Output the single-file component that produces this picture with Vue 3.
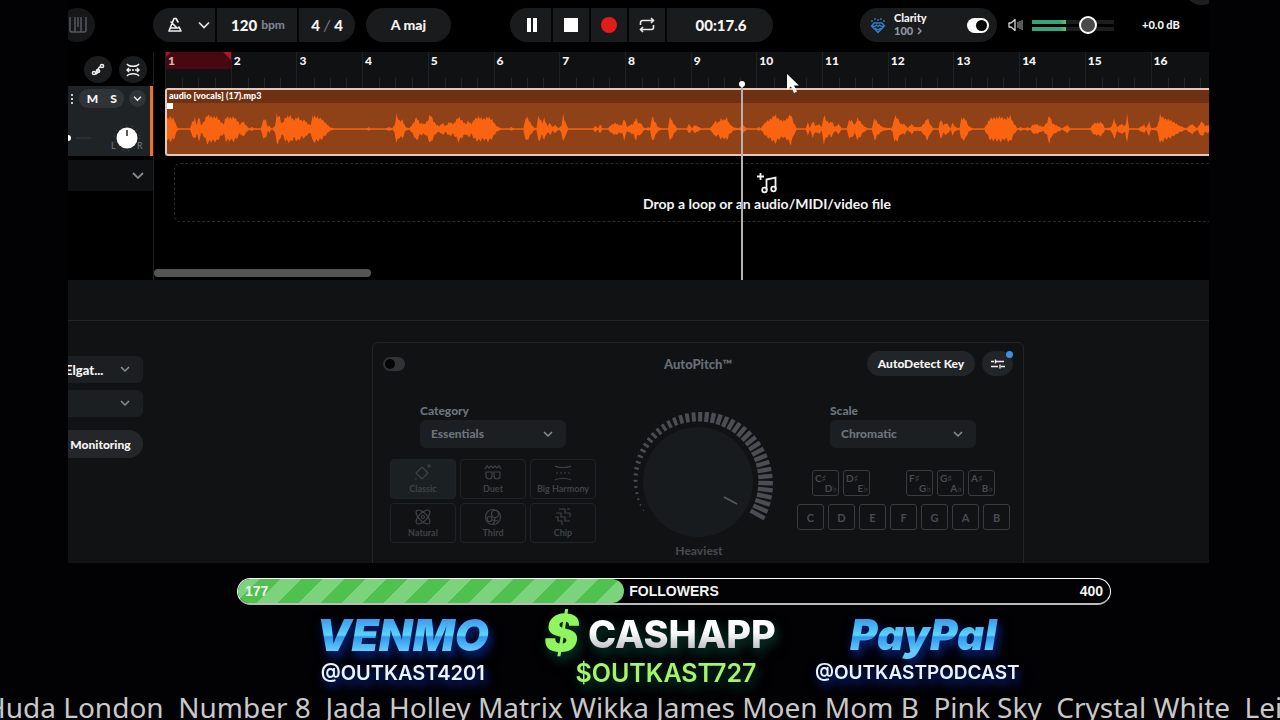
<script setup>
import { ref } from 'vue'

const bars = Array.from({ length: 16 }, (_, i) => i + 1)
const clarityOn = ref(true)
const pitchOn = ref(false)
const volume = ref(74)
const category = ref('Essentials')
const scale = ref('Chromatic')
const voice = ref('Classic')

const voices = ['Classic', 'Duet', 'Big Harmony', 'Natural', 'Third', 'Chip']
const sharps = [
  [['C♯', 'D♭'], ['D♯', 'E♭']],
  [['F♯', 'G♭'], ['G♯', 'A♭'], ['A♯', 'B♭']],
]
const naturals = [['C', 'D', 'E'], ['F', 'G', 'A', 'B']]

const envelope = '0:10,3:12,7:10,10:2,12:1,23:1,25:6,28:11,30:4,32:14,34:4,36:6,38:9,40:14,45:12,50:12,54:7,57:5,59:12,64:11,67:12,71:8,73:4,76:8,79:4,82:1,85:2,88:1,94:1,97:10,99:9,101:2,103:4,104:1,106:1,108:3,110:14,113:12,115:5,119:12,124:13,127:9,131:12,135:8,138:9,141:5,144:4,146:13,150:12,155:10,159:6,163:2,167:1,200:1,202:2,204:1,219:1,223:2,226:1,228:4,230:14,233:8,236:9,239:2,243:1,247:6,250:12,253:6,258:5,261:8,264:15,267:8,270:4,273:3,276:6,279:3,283:7,287:5,292:12,296:8,299:5,302:8,305:5,308:10,312:12,317:10,322:12,326:9,330:3,335:1,343:1,345:2,348:1,357:1,360:13,363:8,367:2,370:1,372:12,374:10,376:6,378:11,381:3,384:6,386:2,389:4,392:1,395:3,397:14,399:7,402:1,427:1,429:3,432:1,434:5,436:1,442:1,445:4,449:6,453:4,456:4,458:11,461:2,464:4,467:5,470:11,472:6,475:6,477:2,480:1,482:2,484:1,486:13,489:7,492:2,496:1,502:1,504:13,507:6,511:1,521:1,523:5,526:1,529:4,535:1,544:1,547:4,549:8,552:6,555:10,558:9,561:11,563:6,567:2,573:1,577:4,581:1,591:1,593:2,595:1,598:5,601:8,605:10,609:14,613:10,617:8,621:10,625:15,628:6,631:1,640:1,642:7,644:1,647:8,650:3,653:5,656:2,658:14,661:8,664:6,666:8,669:2,673:5,676:1,681:1,683:8,686:9,689:4,692:11,695:7,698:3,702:1,706:1,709:11,712:6,717:2,725:1,727:3,729:13,732:11,735:5,739:5,742:1,746:5,749:2,755:2,758:5,762:11,765:4,768:1,773:1,775:10,778:4,781:6,785:1,787:6,790:2,794:1,796:11,800:10,803:3,807:1,819:1,822:6,825:11,830:11,835:12,840:10,845:13,848:6,852:1,855:2,859:1,862:2,865:1,867:4,871:5,875:3,878:2,882:7,884:14,887:6,892:3,897:1,902:4,905:1,925:1,929:6,933:6,936:7,940:1,946:2,949:10,952:2,956:5,960:3,962:14,964:1,973:1,979:4,981:1,984:7,986:1,992:2,995:14,1000:10,1005:9,1010:6,1015:3,1021:1,1027:5,1032:1,1037:8,1040:3,1044:4'
  .split(',')
  .map((p) => p.split(':').map(Number))

function ampAt(x) {
  let i = envelope.findIndex((p) => p[0] >= x)
  if (i <= 0) return envelope[0][1]
  const [x0, a0] = envelope[i - 1]
  const [x1, a1] = envelope[i]
  return a0 + ((a1 - a0) * (x - x0)) / (x1 - x0)
}
const upper = []
const lower = []
for (let x = 0; x <= 1044; x++) {
  const a = ampAt(x)
  const up = a < 2 ? a * 0.8 : a * (0.98 + 0.16 * Math.sin(x * 2.3))
  const down = a < 2 ? a * 0.8 : a * (0.98 + 0.16 * Math.cos(x * 1.7))
  upper.push(`${x},${(17 - up).toFixed(1)}`)
  lower.unshift(`${x},${(17 + down).toFixed(1)}`)
}
const wave = [...upper, ...lower].join(' ')

const ticks = Array.from({ length: 43 }, (_, i) => {
  const t = i / 42
  const a = ((153 + 236 * t) * Math.PI) / 180
  const r0 = 62 - 3 * t
  const r1 = r0 + 1 + 15 * Math.pow(t, 0.8)
  return {
    x1: (80 + r0 * Math.cos(a)).toFixed(1),
    y1: (80 + r0 * Math.sin(a)).toFixed(1),
    x2: (80 + r1 * Math.cos(a)).toFixed(1),
    y2: (80 + r1 * Math.sin(a)).toFixed(1),
    w: (1.2 + 3.2 * Math.min(1, t * 1.8)).toFixed(1),
  }
})

const followers = 177
const goal = 400
</script>

<template>
  <div class="page">
    <div class="studio">
      <header class="topbar">
        <button class="round-btn piano" aria-label="Keyboard">
          <svg width="18" height="18" viewBox="0 0 18 18" fill="none" stroke="#55585d" stroke-width="1.5"><path d="M1 1v13a2 2 0 0 0 2 2h12a2 2 0 0 0 2-2V1M6 1v10M9 1v10M12 1v10M6 11v5M12 11v5" /></svg>
        </button>
        <div class="pill tempo">
          <button class="seg metro" aria-label="Metronome">
            <svg width="16" height="16" viewBox="0 0 16 16" fill="none" stroke="#f2f2f2" stroke-width="1.6" stroke-linejoin="round" stroke-linecap="round"><path d="M11 5 9 1.500H7L2 14h12l-2-4M4 11h7M10 11 4 5" /></svg>
            <svg width="12" height="8" viewBox="0 0 12 8" fill="none" stroke="#e6e6e6" stroke-width="1.700"><path d="M1 1.500 6 6.500 11 1.500" /></svg>
          </button>
          <button class="seg bpm"><span>120</span><small>bpm</small></button>
          <button class="seg sig">4 <i>/</i> 4</button>
        </div>
        <button class="pill key">A maj</button>
        <div class="pill transport">
          <button class="seg pause" aria-label="Pause"><svg width="12" height="14"><path d="M1 0h4v14H1zM7 0h4v14H7z" fill="#fff" /></svg></button>
          <button class="seg" aria-label="Stop"><svg width="14" height="14"><path d="M0 0h14v14H0z" fill="#fff" /></svg></button>
          <button class="seg" aria-label="Record"><svg width="18" height="18"><circle cx="9" cy="9" r="8" fill="#e21b1b" /></svg></button>
          <button class="seg" aria-label="Loop"><svg width="16" height="16" viewBox="0 0 16 16" fill="none" stroke="#e8e8e8" stroke-width="1.600"><path d="M1.500 8V5.500a2 2 0 0 1 2-2H14M12 1l2.500 2.500L12 6M14.500 8v2.500a2 2 0 0 1-2 2H2M4 10l-2.500 2.500L4 15" /></svg></button>
          <span class="seg time">00:17.6</span>
        </div>
        <div class="pill clarity">
          <svg width="16" height="17" viewBox="0 0 16 17" fill="none" stroke="#2f7fc8" stroke-width="1.300"><path d="M4 6h8l2.500 3L8 15.500 1.500 9zM1.500 9l3 .5L6.500 8 8 9.500 9.500 8l2 1.500 3-.5M5 11l3 2 3-2M5 1v2M8 2v2M11 1v2M2 3v2M14 3v2" /></svg>
          <label class="clarity-text" for="clarity"><b>Clarity</b><span>100 <svg width="5" height="8" viewBox="0 0 5 8" fill="none" stroke="#9296a0" stroke-width="1.500"><path d="m1 1 3 3-3 3" /></svg></span></label>
          <input id="clarity" v-model="clarityOn" class="switch" type="checkbox">
        </div>
        <svg class="speaker" width="16" height="14" viewBox="0 0 16 14" fill="none" stroke="#d5d5d5" stroke-width="1.300"><path d="M1 5h2l4-3.500v11L3 9H1z" stroke-linejoin="round" /><path d="M10 4v6M12 3v8M14 2v10" stroke="#8a8a8a" /></svg>
        <div class="volume">
          <div class="meter"></div><div class="meter"></div>
          <input v-model="volume" type="range" min="0" max="100" aria-label="Volume">
        </div>
        <output class="db">+0.0 dB</output>
        <span class="corner"></span>
      </header>

      <main class="arranger">
        <aside class="tracks">
          <div class="tools">
            <button class="tool" aria-label="Automation"><svg width="14" height="14" viewBox="0 0 14 14" fill="none" stroke="#f0f0f0" stroke-width="1.500"><circle cx="3" cy="10" r="1.600" /><circle cx="11" cy="3" r="1.600" /><circle cx="7" cy="8" r="1.600" /><path d="M4.500 11c2 0 2-1 2.500-3 0-3 1-4 2.500-4" /></svg></button>
            <button class="tool" aria-label="Snap"><svg width="14" height="14" viewBox="0 0 14 14" fill="none" stroke="#f0f0f0" stroke-width="1.400"><path d="M1 1c2 3 10 3 12 0M1 13c2-3 10-3 12 0M1 7h4M9 7h4M3 5 1 7l2 2M11 5l2 2-2 2M6 7h2" /></svg></button>
          </div>
          <section class="track">
            <div class="track-row">
              <svg width="4" height="12"><path d="M1 1h2v2H1zM1 5h2v2H1zM1 9h2v2H1z" fill="#ccc" /></svg>
              <div class="ms"><button>M</button><button>S</button></div>
              <button class="more" aria-label="Track menu"><svg width="9" height="6" viewBox="0 0 10 7" fill="none" stroke="#eee" stroke-width="1.600"><path d="m1 1 4 4 4-4" /></svg></button>
            </div>
            <div class="track-row knobs">
              <svg width="82" height="32" viewBox="0 0 82 32"><circle cx="0" cy="16" r="3" fill="#fff" /><path d="M8 16h15" stroke="#383c40" /><circle cx="59" cy="16" r="13" fill="none" stroke="#53575b" stroke-dasharray="1 5" /><circle cx="59" cy="16" r="10.500" fill="#fff" /><path d="M59 8v6" stroke="#222" stroke-width="1.500" /><text x="43" y="27">L</text><text x="69" y="27">R</text></svg>
            </div>
          </section>
          <button class="extra" aria-label="Expand"><svg width="12" height="8" viewBox="0 0 12 8" fill="none" stroke="#85888f" stroke-width="1.800"><path d="m1 1 5 5 5-5" /></svg></button>
        </aside>

        <section class="timeline">
          <div class="lanes">
            <div class="ruler"><div class="bars">
              <div v-for="n in bars" :key="n" class="bar" :class="{ loop: n === 1 }"><span>{{ n }}</span><i></i><i></i><i></i></div>
            </div></div>
            <article class="clip">
              <div class="clip-name">audio [vocals] (17).mp3</div>
              <svg class="wave" viewBox="0 0 1044 34" preserveAspectRatio="none"><polygon :points="wave" fill="#fa6410" /></svg>
              <span class="fade"></span>
            </article>
            <div class="drop">
              <svg width="22" height="22" viewBox="0 0 22 22" fill="none" stroke="#f2f2f2" stroke-width="1.800"><path d="M4.500 1v7M1 4.500h7M10.500 18V7.500l9-2V17" /><circle cx="8.500" cy="18" r="2.300" /><circle cx="17.500" cy="17" r="2.300" /></svg>
              <p>Drop a loop or an audio/MIDI/video file</p>
            </div>
            <div class="playhead"></div>
            <svg class="cursor" width="13" height="20" viewBox="0 0 13 20"><path d="M1 0v16l4-3.500 3 6.500 3-1.500-3-6h5z" fill="#fff" /></svg>
          </div>
          <div class="scroll"><div></div></div>
        </section>
      </main>

      <section class="lower">
        <div class="lower-head"></div>
        <div class="lower-body">
          <div class="inputs">
            <div class="field"><select aria-label="Input device"><option>Elgat...</option></select><svg width="10" height="7" viewBox="0 0 10 7"><path d="m1 1 4 4 4-4" /></svg></div>
            <div class="field"><select aria-label="Input channel"><option></option></select><svg width="10" height="7" viewBox="0 0 10 7"><path d="m1 1 4 4 4-4" /></svg></div>
            <button class="monitoring">Monitoring</button>
          </div>

          <section class="pitch">
            <div class="pitch-head">
              <input v-model="pitchOn" class="switch dim" type="checkbox" aria-label="AutoPitch">
              <h2>AutoPitch™</h2>
              <div class="pitch-actions">
                <button class="detect">AutoDetect Key</button>
                <button class="settings" aria-label="Settings"><svg width="14" height="10" viewBox="0 0 14 10" fill="none" stroke="#eee" stroke-width="1.400"><path d="M0 2.500h3M5 2.500h8M0 7.500h7M10 7.500h4M4.500 .5v4M9 5.500v4" /></svg><span></span></button>
              </div>
            </div>
            <div class="pitch-body">
              <div class="voice-col">
                <div class="choice">
                  <label for="category">Category</label>
                  <div class="field soft"><select id="category" v-model="category"><option>Essentials</option></select><svg width="10" height="7" viewBox="0 0 10 7"><path d="m1 1 4 4 4-4" /></svg></div>
                </div>
                <div class="voices">
                  <button v-for="v in voices" :key="v" :class="{ on: v === voice }" @click="voice = v">
                    <svg width="18" height="18" viewBox="0 0 18 18">
                      <path v-if="v === 'Classic'" d="m8 3 6 6-6 6-6-6zM13 2h4M15 0v4M1 15h2" />
                      <path v-else-if="v === 'Duet'" d="M1 5l2-3 2 2 2-2 2 2 2-2 2 2 2-2 2 3M2 8h6v4a3 3 0 0 1-6 0zM10 8h6v4a3 3 0 0 1-6 0z" />
                      <path v-else-if="v === 'Big Harmony'" d="M1 2c3 2 13 2 16 0M1 16c3-2 13-2 16 0M2 9h2M6 9h2M10 9h2M14 9h2" />
                      <g v-else-if="v === 'Natural'"><ellipse cx="9" cy="9" rx="4" ry="9" transform="rotate(45 9 9)" /><ellipse cx="9" cy="9" rx="4" ry="9" transform="rotate(-45 9 9)" /><circle cx="9" cy="9" r="1.500" /></g>
                      <g v-else-if="v === 'Third'"><circle cx="9" cy="9" r="7.500" /><circle cx="11" cy="6" r="3.500" /><circle cx="5.500" cy="11" r="2.500" /><path d="M11 10c0 3-1 5-2 6M8 12l6 1" /></g>
                      <path v-else d="M2 5h5v4h4v4h5M5 1h6v4h5v4M1 9h3v4h4v4M13 1h3" />
                    </svg>
                    <span>{{ v }}</span>
                  </button>
                </div>
              </div>

              <div class="dial">
                <svg width="160" height="160" viewBox="0 0 160 160">
                  <line v-for="(t, i) in ticks" :key="i" :x1="t.x1" :y1="t.y1" :x2="t.x2" :y2="t.y2" :stroke-width="t.w" stroke="#4a4e53" />
                  <circle cx="79" cy="80" r="55" fill="#171b1d" />
                  <path d="m105 95 13 7" stroke="#565a5f" stroke-width="1.500" />
                </svg>
                <span>Heaviest</span>
              </div>

              <div class="scale-col">
                <div class="choice">
                  <label for="scale">Scale</label>
                  <div class="field soft"><select id="scale" v-model="scale"><option>Chromatic</option></select><svg width="10" height="7" viewBox="0 0 10 7"><path d="m1 1 4 4 4-4" /></svg></div>
                </div>
                <div class="keys sharp">
                  <div v-for="(g, i) in sharps" :key="i"><button v-for="k in g" :key="k[0]"><span>{{ k[0] }}</span><span>{{ k[1] }}</span></button></div>
                </div>
                <div class="keys natural">
                  <div v-for="(g, i) in naturals" :key="i"><button v-for="k in g" :key="k">{{ k }}</button></div>
                </div>
              </div>
            </div>
          </section>
        </div>
      </section>
    </div>

    <footer class="stream">
      <div class="goal">
        <div class="goal-fill" :style="{ width: (followers / goal) * 100 + '%' }"></div>
        <span>{{ followers }}</span><span>FOLLOWERS</span><span>{{ goal }}</span>
      </div>
      <div class="tips">
        <div class="tip venmo"><strong>VENMO</strong><span>@OUTKAST4201</span></div>
        <div class="tip cash"><strong><em>$</em><b>CASHAPP</b></strong><span>$OUTKAST727</span></div>
        <div class="tip paypal"><strong>PayPal</strong><span>@OUTKASTPODCAST</span></div>
      </div>
      <div class="ticker">Huda London&nbsp; Number 8&nbsp; Jada Holley Matrix Wikka James Moen Mom B&nbsp; Pink Sky&nbsp; Crystal White&nbsp; Leigh</div>
    </footer>
  </div>
</template>

<style>
body { background: #000; }
</style>

<style scoped>
* { box-sizing: border-box; }
.page { min-height: 100vh; overflow: hidden; background: #020103; color: #f4f4f4; font-family: Lato, "Open Sans", "DejaVu Sans", sans-serif; }
button, select, input { font: inherit; color: inherit; margin: 0; }
button { border: 0; padding: 0; background: none; display: flex; align-items: center; justify-content: center; cursor: pointer; }
svg { display: block; flex: none; }
.studio { margin: 0 71px 0 68px; overflow: hidden; background: #000; }

.topbar { position: relative; display: flex; align-items: center; height: 52px; padding: 8px 29px 10px 0; font-weight: 900; font-size: 14px; }
.round-btn { width: 35px; height: 34px; border-radius: 50%; background: #161719; }
.piano { margin-left: -8px; }
.pill { display: flex; height: 34px; border-radius: 17px; background: #1a1b1d; overflow: hidden; white-space: nowrap; flex: none; line-height: 18px; }
.tempo { margin-left: 58px; }
.seg { display: flex; align-items: center; justify-content: center; width: 38px; border-right: 2px solid #060607; }
.seg:last-child { border-right: 0; }
.metro { width: 64px; gap: 15px; padding-left: 9px; }
.bpm { width: 82px; gap: 4px; font-size: 15px; padding-left: 2px; }
.bpm small { font-size: 12px; color: #7d8290; }
.sig { width: 56px; gap: 4px; font-size: 15px; }
.sig i { color: #7d8290; font-weight: 400; }
.key { width: 85px; margin-left: 11px; align-items: center; }
.transport { margin-left: 59px; }
.pause { width: 43px; padding-left: 3px; }
.time { width: 106px; font-size: 15px; padding-left: 2px; }
.clarity { width: 137px; margin-left: auto; padding: 0 8px 0 10px; align-items: center; }
.clarity-text { display: flex; flex-direction: column; margin: 0 auto 2px 8px; font-size: 11px; line-height: 13px; }
.clarity-text span { display: flex; align-items: center; gap: 4px; color: #9296a0; }
.switch { appearance: none; position: relative; width: 22px; height: 15px; border-radius: 8px; background: #fff; }
.switch::after { content: ""; position: absolute; top: 2px; right: 2px; width: 11px; height: 11px; border-radius: 50%; background: #050505; }
.switch.dim { background: #303235; height: 14px; }
.switch.dim::after { right: auto; left: 2px; top: 2px; width: 10px; height: 10px; }
.speaker { margin-left: 11px; }
.volume { position: relative; width: 82px; margin-left: 8px; display: grid; gap: 3px; }
.meter { height: 4px; background: linear-gradient(90deg, #35a67c 0 28px, #6cc45c 34px, #1c1d1f 34px); }
.volume input { appearance: none; position: absolute; left: 0; top: -4px; width: 100%; height: 19px; background: none; }
.volume input::-webkit-slider-thumb { appearance: none; width: 18px; height: 18px; border: 2px solid #fff; border-radius: 50%; background: #494949; }
.db { margin: 0 0 2px 28px; font-size: 11px; font-weight: 900; width: 38px; white-space: nowrap; }
.corner { position: absolute; right: -10px; top: -30px; width: 35px; height: 35px; border-radius: 50%; background: #1d1f21; }

.arranger { display: grid; grid-template-columns: 86px minmax(0, 1fr); height: 228px; }
.tracks { border-right: 1px solid #1d1f21; }
.tools { display: flex; gap: 7px; padding: 4px 0 3px 16px; }
.tool { width: 28px; height: 27px; border-radius: 50%; background: #1b1c1e; }
.track { height: 70px; background: #1f2326; border-right: 3px solid #f0702a; padding-top: 3px; }
.track-row { display: flex; align-items: center; gap: 5px; padding-left: 2px; }
.ms { display: flex; width: 45px; height: 19px; border-radius: 9px; background: #303437; font-size: 12px; font-weight: 900; padding: 0 0 1px 3px; }
.ms button { flex: 1; }
.more { width: 17px; height: 17px; border-radius: 50%; background: #303437; }
.knobs { padding: 14px 0 0; }
.knobs text { font-size: 9px; fill: #777b80; }
.extra { width: 100%; height: 31px; margin-top: 4px; justify-content: flex-end; padding-right: 9px; background: #0e1011; }
.timeline { display: flex; flex-direction: column; justify-content: space-between; padding-bottom: 3px; }
.lanes { position: relative; margin-left: 11px; height: 216px; }
.ruler { height: 36px; overflow: hidden; background: #0f1112; }
.bars { display: flex; width: 100.7%; height: 100%; }
.bar { flex: 1; display: grid; grid-template-columns: repeat(4, 1fr); border-left: 1px solid #1f2123; font-size: 12px; font-weight: 900; line-height: 17px; }
.bar span { padding-left: 2px; }
.bar i { height: 10px; align-self: end; border-left: 1px solid #242628; }
.loop { background-size: 100% 17px; background-repeat: no-repeat; background-image: linear-gradient(225deg, #b31225 5px, transparent 6px), linear-gradient(135deg, #b31225 3px, transparent 4px), linear-gradient(#47090f, #47090f); color: #d9b7b7; }
.clip { position: relative; height: 68px; background: #8f4118; border: 2px solid #e6c6b4; border-right: 0; border-radius: 3px 0 0 3px; overflow: hidden; }
.clip-name { height: 13px; padding-left: 2px; background: #6f3114; color: #fff; font-size: 9px; line-height: 11px; font-weight: 900; }
.wave { width: 100%; height: 34px; margin-top: 9px; }
.fade { position: absolute; left: 0; top: 13px; width: 6px; height: 6px; background: #fff; }
.drop { margin: 7px 0 0 9px; height: 59px; border: 1px dashed #292929; border-right: 0; border-radius: 6px 0 0 6px; display: flex; flex-direction: column; align-items: center; padding: 8px 0 0 150px; }
.drop p { margin: 1px 0 0; font-size: 14px; line-height: 18px; font-weight: 700; }
.playhead { position: absolute; left: 55%; margin-left: 2px; top: 31px; height: 197px; border-left: 2px solid #b5b2b1; }
.playhead::before { content: ""; position: absolute; left: -4px; top: -2px; width: 6px; height: 6px; border-radius: 50%; background: #fff; }
.cursor { position: absolute; left: 59%; margin-left: 5px; top: 22px; }
.scroll div { width: 217px; height: 8px; border-radius: 4px; background: #555; }

.lower { height: 283px; background: #101214; overflow: hidden; }
.lower-head { height: 41px; border-bottom: 1px solid #222426; }
.lower-body { display: flex; padding-top: 21px; }
.inputs { width: 75px; padding-top: 14px; display: flex; flex-direction: column; gap: 7px; }
.field { position: relative; display: flex; align-items: center; height: 27px; }
.field select { appearance: none; width: 100%; height: 100%; border: 0; border-radius: 6px; background: #1c1f21; font-size: 12px; font-weight: 900; outline: 0; }
.field svg { position: absolute; right: 13px; fill: none; stroke: #8b8e93; stroke-width: 1.5; pointer-events: none; }
.inputs .field { margin-left: -20px; }
.inputs select { padding: 0 0 0 17px; font-size: 13px; }
.monitoring { margin: 6px 0 0 -20px; padding-left: 10px; height: 28px; border-radius: 14px; background: #242629; font-size: 12px; font-weight: 900; }
.pitch { width: 652px; height: 240px; margin-left: 229px; border: 1px solid #222426; border-radius: 6px 6px 0 0; }
.pitch-head { display: grid; grid-template-columns: 1fr auto 1fr; align-items: center; padding: 8px 10px 0; }
.pitch-head h2 { margin: 0; color: #686e76; font-size: 13px; line-height: 18px; font-weight: 900; }
.pitch-actions { display: flex; justify-content: flex-end; gap: 7px; }
.detect { width: 108px; height: 25px; border-radius: 13px; background: #222527; font-size: 12px; font-weight: 900; white-space: nowrap; }
.settings { position: relative; width: 31px; height: 25px; border-radius: 13px; background: #222527; }
.settings span { position: absolute; right: 0; top: 0; width: 7px; height: 7px; border-radius: 50%; background: #3d8fe0; }
.pitch-body { display: flex; justify-content: space-between; padding: 26px 13px 0 17px; }
.choice { display: flex; flex-direction: column; width: 146px; margin-left: 30px; font-size: 12px; line-height: 18px; font-weight: 900; color: #6d747c; }
.soft { height: 28px; }
.voices { display: grid; grid-template-columns: repeat(3, 66px); gap: 4px; margin-top: 11px; }
.soft select { padding: 0 11px; }
.voices button { height: 40px; flex-direction: column; gap: 1px; border: 1px solid #202326; border-radius: 4px; font-size: 9px; line-height: 12px; font-weight: 700; color: #3f4347; white-space: nowrap; }
.voices svg { width: 18px; fill: none; stroke: #3f4347; stroke-width: 1.2; }
.voices button.on { background: #1b2022; }
.dial { display: flex; flex-direction: column; align-items: center; margin-right: -5px; width: 160px; color: #44484c; font-size: 12px; font-weight: 900; line-height: 16px; }
.dial svg { margin-bottom: -19px; }
.dial span { position: relative; }
.scale-col { width: 213px; }
.scale-col .choice { margin-left: 33px; }
.keys { display: flex; }
.keys div { display: flex; gap: 4px; }
.keys button { width: 27px; height: 26px; border: 1px solid #393c3f; border-radius: 3px; color: #484c50; font-size: 11px; font-weight: 700; }
.sharp { margin-top: 22px; padding-left: 15px; gap: 36px; }
.sharp button { flex-direction: column; align-items: stretch; font-size: 10px; line-height: 10px; }
.sharp span { text-align: left; padding-left: 2px; }
.sharp span + span { text-align: right; padding: 0 1px; }
.natural { margin-top: 8px; gap: 4px; }

.stream { font-family: "Liberation Sans", Arial, sans-serif; }
.goal { position: relative; display: flex; justify-content: space-between; align-items: center; height: 27px; margin: 15px 169px 0 237px; padding: 0 7px; border: 1px solid #fff; border-bottom: 2px solid #bbb; border-radius: 14px; font-size: 14px; font-weight: 700; overflow: hidden; }
.goal span { position: relative; flex: 1; text-align: center; }
.goal span:nth-child(2) { text-align: left; }
.goal span:last-child { text-align: right; }
.goal-fill { position: absolute; left: 0; top: 0; bottom: 0; border-radius: 0 13px 13px 0; background: repeating-linear-gradient(135deg, #7bd47b 0 15px, #4fc14f 15px 30px); }
.tips { display: grid; grid-template-columns: repeat(3, 1fr); margin: 3px 234px 0 274px; height: 84px; }
.tip { display: flex; flex-direction: column; align-items: center; white-space: nowrap; font-family: Inter, sans-serif; filter: drop-shadow(3px 5px 3px #061a5e) drop-shadow(0 3px 5px #04103f); }
.tip strong { height: 52px; padding: 0 4px; font-size: 44px; line-height: 54px; font-weight: 900; font-style: italic; color: transparent; background: linear-gradient(#3f9fee 24%, #5bd4fb 52%, #2f98ee 56%, #63cbfa 82%); background-clip: text; }
.tip > span { font-size: 20px; line-height: 26px; font-weight: 600; color: #eaf4ff; }
.tip.paypal strong { font-size: 42px; padding-left: 16px; }
.tip.paypal > span { font-size: 19px; }
.tip.cash { filter: drop-shadow(3px 5px 4px #06281f) drop-shadow(0 3px 5px #041a14); }
.cash strong { display: flex; align-items: center; gap: 9px; background: none; font-style: normal; }
.cash em { font-size: 52px; font-weight: 900; line-height: 48px; color: #91f55f; }
.cash b { font-size: 38px; font-weight: 800; background: linear-gradient(#fff 45%, #b9bcc0 80%); background-clip: text; }
.tip.cash > span { font-size: 25px; padding-left: 12px; color: #a3f56c; }
.ticker { font-family: "Noto Sans", sans-serif; font-size: 28px; line-height: 30px; height: 28px; margin-left: -15px; margin-right: -100px; color: #c9c9c9; white-space: nowrap; }
</style>
